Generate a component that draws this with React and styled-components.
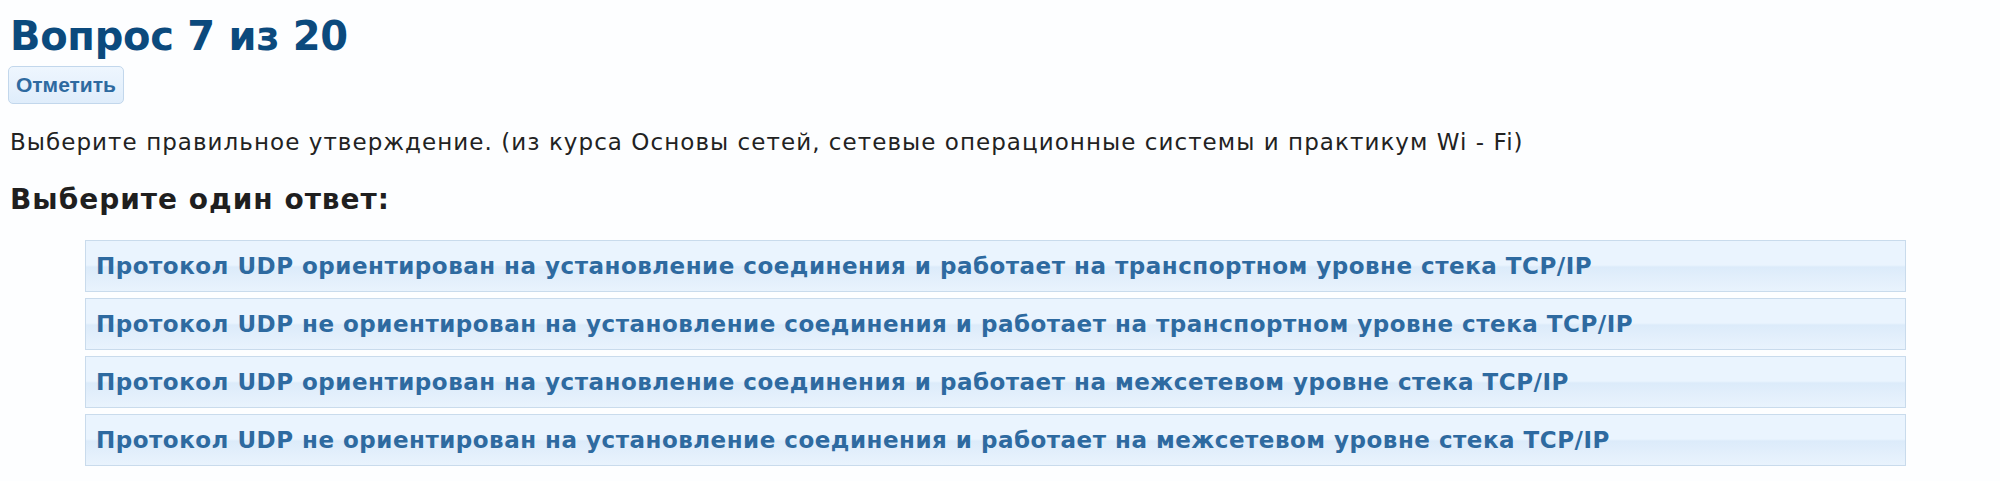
import React from "react";
import styled, { createGlobalStyle } from "styled-components";

const GlobalStyle = createGlobalStyle`
  html, body {
    margin: 0;
    padding: 0;
    background: #fdfeff;
  }
  body {
    font-family: "DejaVu Sans", "Open Sans", sans-serif;
    color: #222;
  }
`;

const QuizContainer = styled.div`
  padding: 8px 94px 0 10px;
`;

const QuestionTitle = styled.h2`
  margin: 0;
  font-size: 40px;
  line-height: 56px;
  font-weight: 700;
  letter-spacing: -0.3px;
  color: #0b4a7d;
`;

const FlagButton = styled.button`
  display: inline-flex;
  align-items: center;
  height: 38px;
  margin: 2px 0 0 -2px;
  padding: 0 7px;
  border: 1px solid #c2d7ec;
  border-radius: 5px;
  background: linear-gradient(to bottom, #eef6fe 0%, #dfedfb 100%);
  color: #2e6aa0;
  font-family: "Liberation Sans", Arial, sans-serif;
  font-size: 21px;
  font-weight: 700;
  cursor: pointer;
`;

const QuestionText = styled.p`
  margin: 22px 0 0;
  font-size: 23px;
  line-height: 32px;
  letter-spacing: 1.05px;
  color: #222;
`;

const AnswerPrompt = styled.h3`
  margin: 24px 0 0;
  font-size: 28px;
  line-height: 36px;
  font-weight: 700;
  letter-spacing: 1px;
  color: #1f1f1f;
`;

const AnswerList = styled.div`
  display: flex;
  flex-direction: column;
  gap: 6px;
  margin: 22px 0 0 75px;
`;

const AnswerOption = styled.div`
  display: flex;
  align-items: center;
  height: 50px;
  padding: 0 10px;
  border: 1px solid #c9dbec;
  background: linear-gradient(
    to bottom,
    #eaf4fe 0%,
    #eaf4fe 48%,
    #dcebfa 52%,
    #e9f3fd 100%
  );
  color: #2e6aa0;
  font-size: 23px;
  font-weight: 700;
  letter-spacing: 0.5px;
  cursor: pointer;

  &:hover {
    background: #dcebfa;
  }
`;

const answers = [
  "Протокол UDP ориентирован на установление соединения и работает на транспортном уровне стека TCP/IP",
  "Протокол UDP не ориентирован на установление соединения и работает на транспортном уровне стека TCP/IP",
  "Протокол UDP ориентирован на установление соединения и работает на межсетевом уровне стека TCP/IP",
  "Протокол UDP не ориентирован на установление соединения и работает на межсетевом уровне стека TCP/IP",
];

const App = () => {
  return (
    <>
      <GlobalStyle />
      <QuizContainer>
        <QuestionTitle>Вопрос 7 из 20</QuestionTitle>
        <FlagButton type="button">Отметить</FlagButton>
        <QuestionText>
          Выберите правильное утверждение. (из курса Основы сетей, сетевые
          операционные системы и практикум Wi - Fi)
        </QuestionText>
        <AnswerPrompt>Выберите один ответ:</AnswerPrompt>
        <AnswerList>
          {answers.map((text) => (
            <AnswerOption key={text}>{text}</AnswerOption>
          ))}
        </AnswerList>
      </QuizContainer>
    </>
  );
};

export default App;
